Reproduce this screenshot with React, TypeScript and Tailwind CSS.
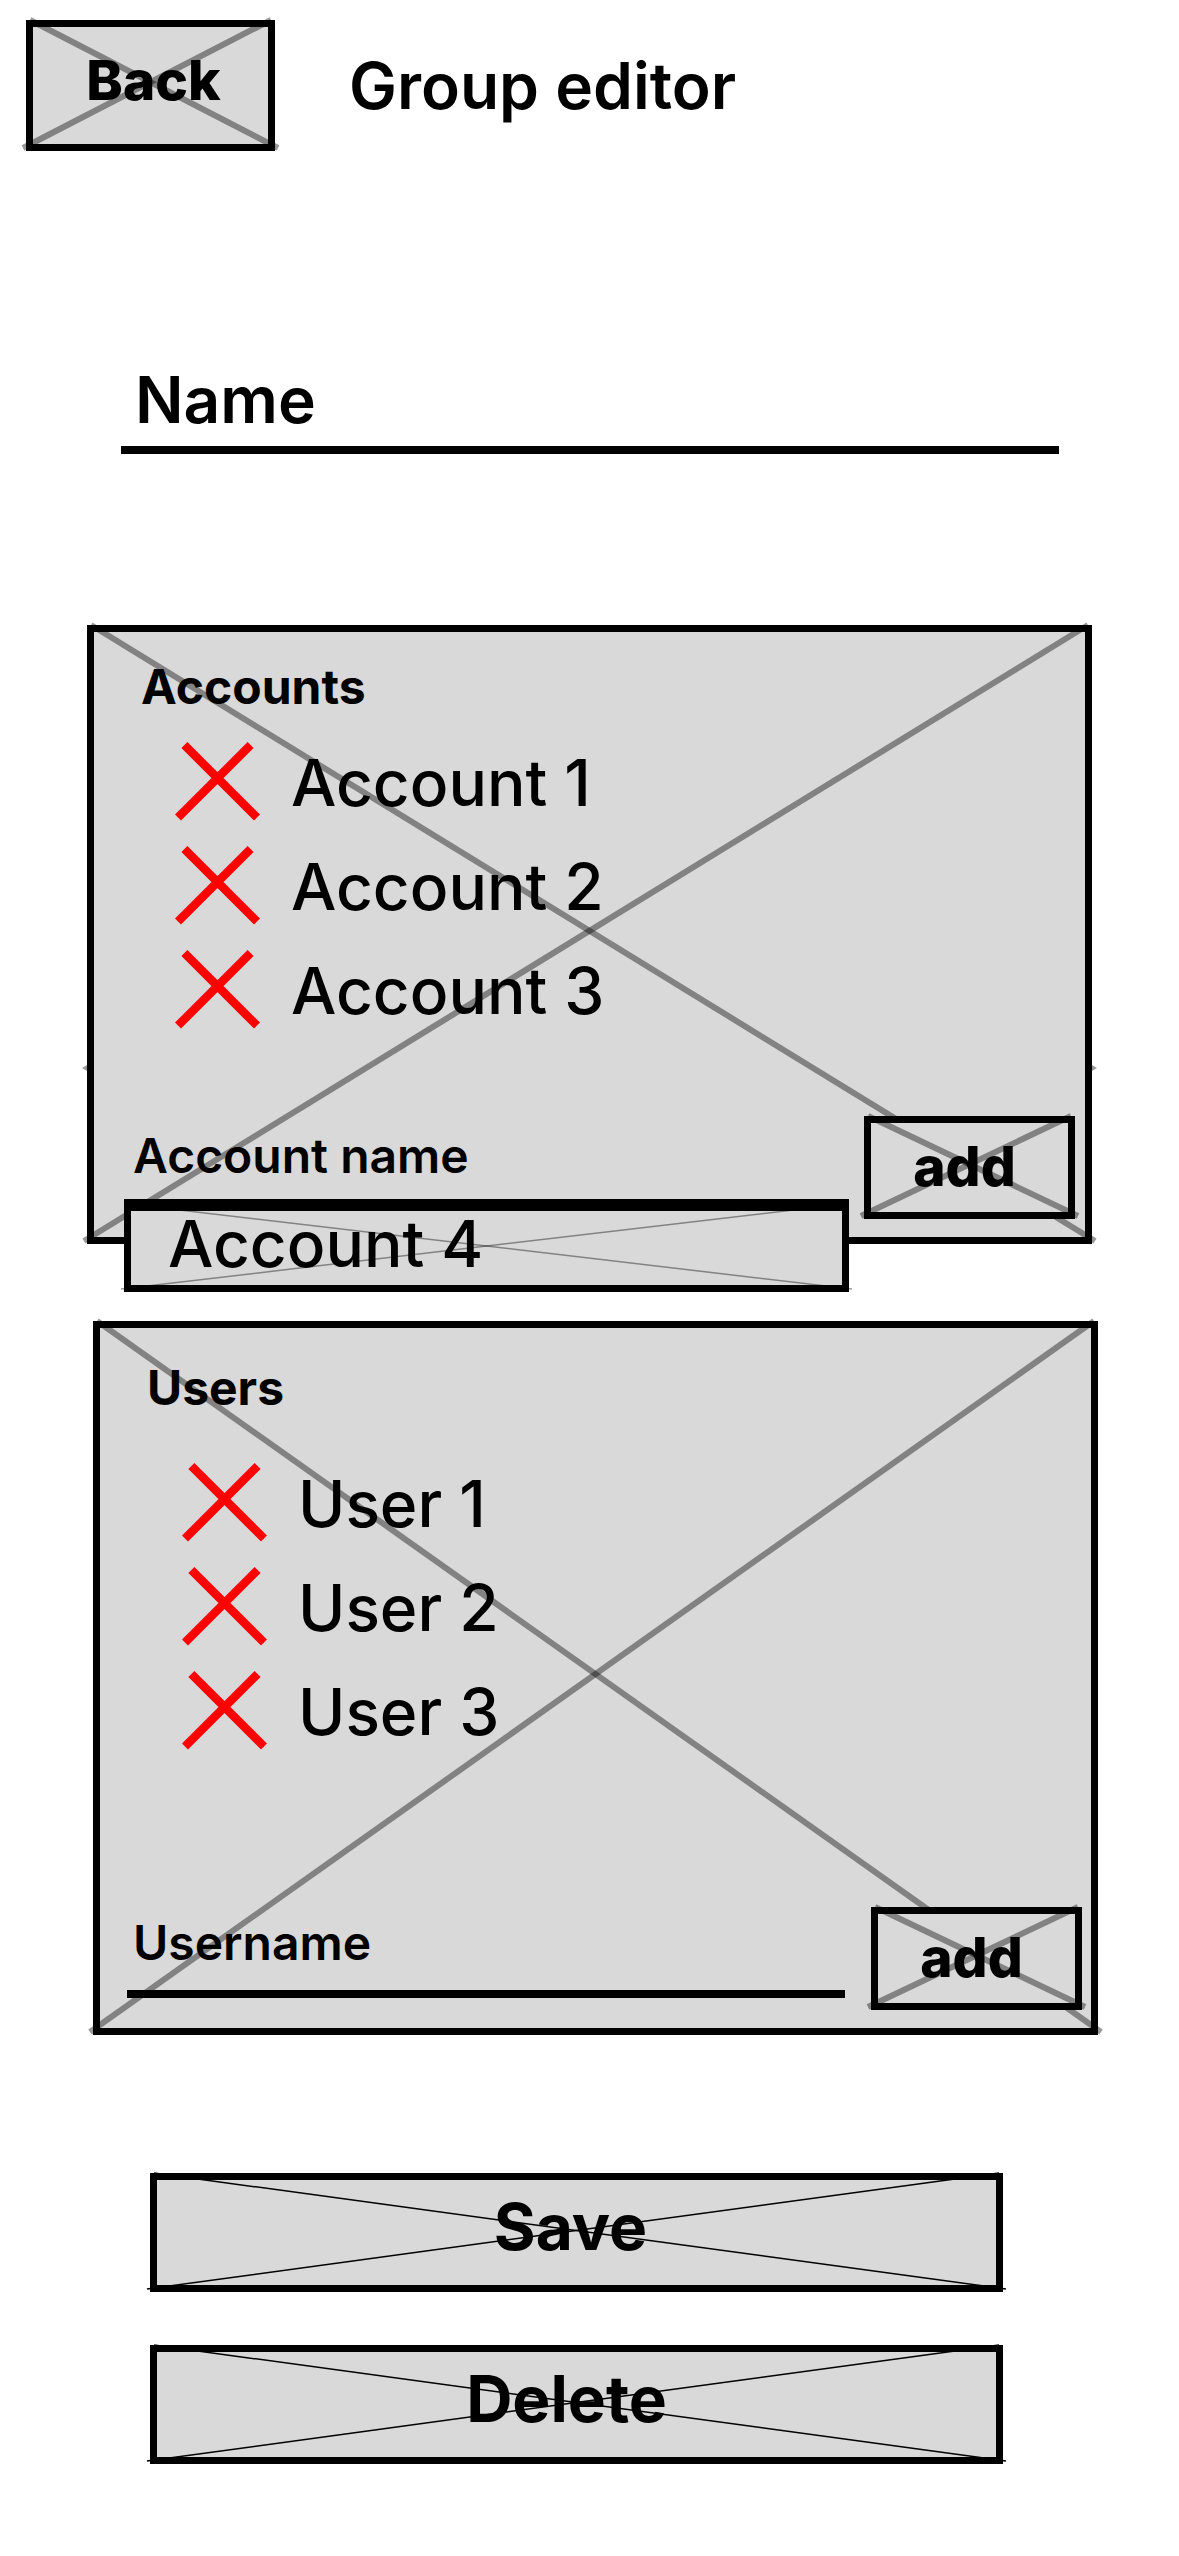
import type { ReactNode } from "react";

type Tone = "soft" | "softThin" | "solidThin";

const strokes: Record<Tone, string> = {
  soft: "stroke-black/40 stroke-[6px]",
  softThin: "stroke-black/40 stroke-[1.5px]",
  solidThin: "stroke-black stroke-[1.5px]",
};

/* Diagonals of a placeholder box, reaching slightly past its lower corners. */
function Cross({ tone = "soft" }: { tone?: Tone }) {
  return (
    <span
      aria-hidden="true"
      className="pointer-events-none absolute -top-[7px] -right-[10px] -bottom-1 -left-[10px]"
    >
      <svg className="absolute h-full w-full overflow-visible">
        <line x1="7" y1="0" x2="100%" y2="100%" className={strokes[tone]} />
      </svg>
      <svg className="absolute h-full w-full -scale-x-100 overflow-visible">
        <line x1="7" y1="0" x2="100%" y2="100%" className={strokes[tone]} />
      </svg>
    </span>
  );
}

/* Small tips that stick out of both sides of a box. */
function SideTips() {
  return (
    <>
      <svg aria-hidden="true" width="5" height="6" className="absolute top-[433px] -left-3 fill-black/40">
        <path d="M0 3L5 0V6Z" />
      </svg>
      <svg aria-hidden="true" width="5" height="6" className="absolute top-[433px] -right-3 fill-black/40">
        <path d="M5 3L0 0V6Z" />
      </svg>
    </>
  );
}

function BoxButton({
  children,
  className,
  tone,
}: {
  children: ReactNode;
  className: string;
  tone?: Tone;
}) {
  return (
    <button
      type="button"
      className={`relative flex shrink-0 items-center justify-center border-[7px] border-black bg-[#d9d9d9] ${className}`}
    >
      <Cross tone={tone} />
      <span className="relative">{children}</span>
    </button>
  );
}

function ItemList({ items, className }: { items: string[]; className: string }) {
  return (
    <ul className={`relative ${className}`}>
      {items.map((item) => (
        <li key={item} className="flex h-[104px] items-center gap-[31px] text-[64px] leading-[78px]">
          <button type="button" aria-label={`Remove ${item}`}>
            <svg width="85" height="82" viewBox="0 0 85 82" className="stroke-[#ff0000] stroke-[8.5px]">
              <path d="M9.400 3L82 75.600M75.600 3L3 75.600" fill="none" />
            </svg>
          </button>
          <span className="font-medium">{item}</span>
        </li>
      ))}
    </ul>
  );
}

const fieldText =
  "block h-[84px] w-full border-b-8 border-black bg-transparent pb-[19px] pl-[6px] text-5xl font-semibold text-black outline-none placeholder:text-black placeholder:opacity-100";

export default function App() {
  return (
    <main className="min-h-screen bg-white pb-[92px] font-['Inter',sans-serif] text-black">
      <header className="flex items-center gap-[74px] pt-5 pl-[26px]">
        <BoxButton className="h-[131px] w-[249px] pb-[11px] pl-[6px] text-[55px] font-extrabold">
          Back
        </BoxButton>
        <h1 className="text-[64px] leading-[78px] font-semibold">Group editor</h1>
      </header>

      <div className="mt-[210px] pr-[120px] pl-[121px]">
        <input
          type="text"
          aria-label="Name"
          placeholder="Name"
          className="block h-[93px] w-full border-b-8 border-black bg-transparent pb-2 pl-[14px] text-[64px] font-semibold outline-none placeholder:text-black placeholder:opacity-100"
        />
      </div>

      <section className="relative z-10 mt-[171px] mr-[87px] ml-[87px] border-[7px] border-black bg-[#d9d9d9] pt-[27px] pb-[18px]">
        <Cross />
        <SideTips />
        <h2 className="relative pl-[47px] text-5xl leading-[56px] font-bold">Accounts</h2>
        <ItemList items={["Account 1", "Account 2", "Account 3"]} className="mt-4 pl-[81px]" />
        <form className="relative mt-[73px] flex items-start gap-[19px] pr-[10px] pl-[33px]">
          <div className="relative mt-[11px] flex-1">
            <input type="text" aria-label="Account name" placeholder="Account name" className={fieldText} />
            <button
              type="button"
              className="absolute top-[72px] -right-1 -left-[3px] h-[93px] border-[7px] border-t-[12px] border-black bg-[#d9d9d9] pb-2 pl-[37px] text-left text-[64px] leading-[64px] font-medium"
            >
              <Cross tone="softThin" />
              <span className="relative">Account 4</span>
            </button>
          </div>
          <BoxButton className="h-[103px] w-[211px] pr-[10px] pb-[3px] text-[55px] font-extrabold">add</BoxButton>
        </form>
      </section>

      <section className="relative mt-[77px] mr-[81px] ml-[93px] border-[7px] border-black bg-[#d9d9d9] pt-8 pb-[18px]">
        <Cross />
        <h2 className="relative pl-[47px] text-5xl leading-[56px] font-bold">Users</h2>
        <ItemList items={["User 1", "User 2", "User 3"]} className="mt-9 pl-[82px]" />
        <form className="relative mt-[143px] flex items-start gap-[26px] pr-[9px] pl-[27px]">
          <div className="mt-[7px] flex-1">
            <input type="text" aria-label="Username" placeholder="Username" className={fieldText} />
          </div>
          <BoxButton className="h-[103px] w-[211px] pr-[10px] pb-[3px] text-[55px] font-extrabold">add</BoxButton>
        </form>
      </section>

      <div className="mt-[138px] flex flex-col gap-[53px] pr-[176px] pl-[150px]">
        <BoxButton tone="solidThin" className="h-[119px] pr-3 pb-[11px] text-[64px] font-bold">
          Save
        </BoxButton>
        <BoxButton tone="solidThin" className="h-[119px] pr-5 pb-[11px] text-[64px] font-bold">
          Delete
        </BoxButton>
      </div>
    </main>
  );
}
